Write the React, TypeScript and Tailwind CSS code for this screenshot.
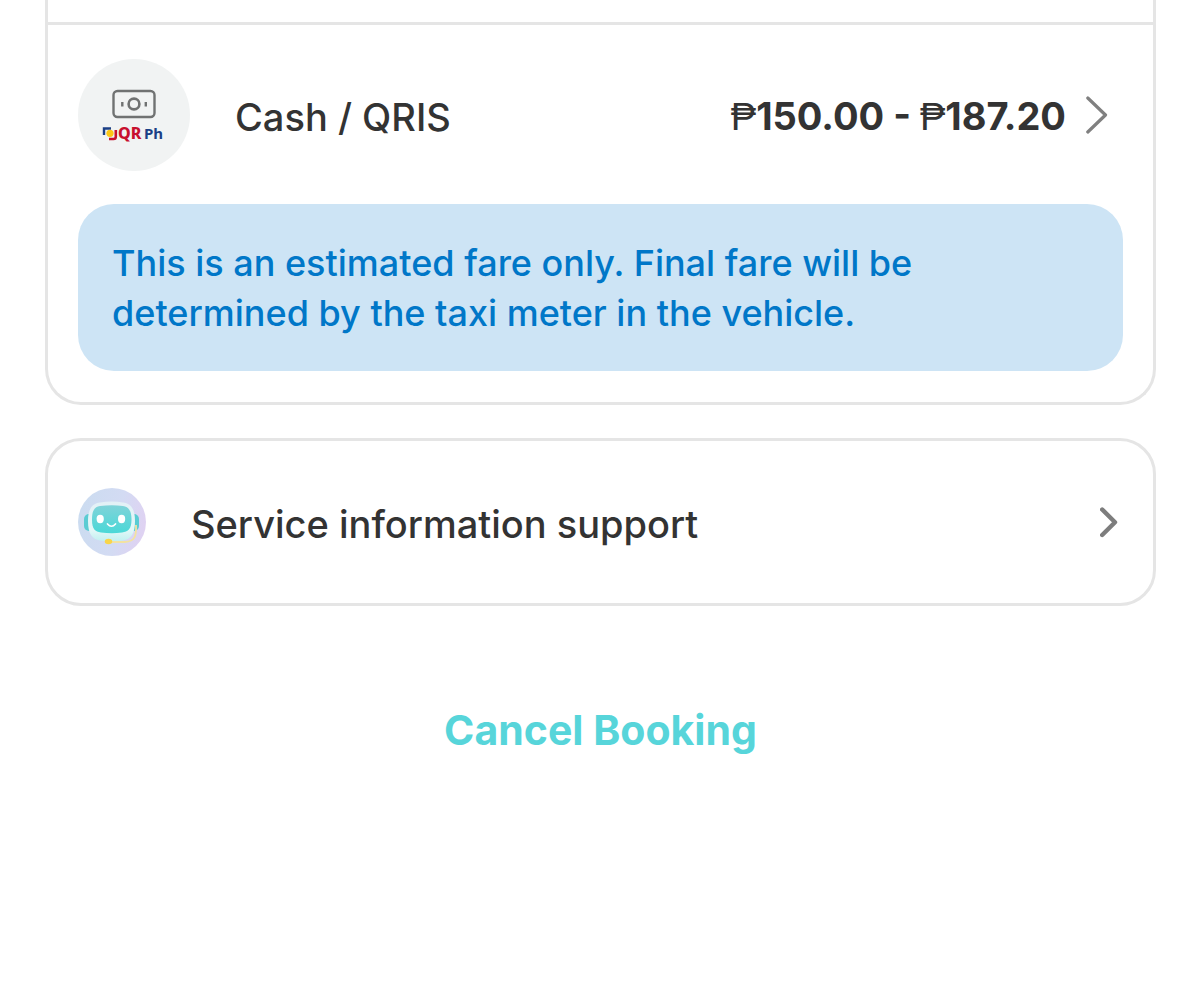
interface ChevronProps {
    large?: boolean;
}

function Chevron({ large = false }: ChevronProps) {
    if (large) {
        return (
            <svg className="shrink-0" width="22" height="38" viewBox="0 0 22 38" fill="none" aria-hidden="true">
                <path
                    d="M1.8 2L19.5 19L1.8 36"
                    stroke="#808080"
                    strokeWidth="3.2"
                    strokeLinecap="round"
                    strokeLinejoin="round"
                />
            </svg>
        );
    }

    return (
        <svg className="shrink-0" width="18" height="32" viewBox="0 0 18 32" fill="none" aria-hidden="true">
            <path
                d="M2.2 3.5L15 16.300L2.2 29"
                stroke="#7d7d7d"
                strokeWidth="4.4"
                strokeLinecap="round"
                strokeLinejoin="round"
            />
        </svg>
    );
}

function PaymentIcon() {
    return (
        <svg className="shrink-0" width="112" height="112" viewBox="0 0 112 112" fill="none" aria-hidden="true">
            <circle cx="56" cy="56" r="56" fill="#f1f3f3" />
            <g stroke="#707272">
                <rect x="35.5" y="32" width="41" height="26" rx="4" strokeWidth="2.4" />
                <circle cx="56" cy="45" r="5.4" strokeWidth="2.6" />
                <path d="M44.300 43v4.500M67.800 43v4.500" strokeWidth="2.4" />
            </g>
            <path d="M26 76V69.500h7" stroke="#1b3f86" strokeWidth="2.4" />
            <path d="M31 80h4.500q2.300 0 2.300-2.300V71" stroke="#c8102e" strokeWidth="2.600" />
            <circle cx="32" cy="74.300" r="3.600" fill="#fdc716" />
            <text x="40" y="80" fontFamily="'Noto Sans', sans-serif" fontSize="16" fontWeight="800" fill="#c8102e">
                QR
            </text>
            <text x="66" y="80" fontFamily="'Noto Sans', sans-serif" fontSize="15" fontWeight="700" fill="#1b3f86">
                Ph
            </text>
        </svg>
    );
}

function RobotIcon() {
    return (
        <svg className="shrink-0" width="68" height="68" viewBox="0 0 68 68" fill="none" aria-hidden="true">
            <defs>
                <linearGradient id="robot-bg" x1="0" y1="20" x2="68" y2="34" gradientUnits="userSpaceOnUse">
                    <stop stopColor="#cbdcf0" />
                    <stop offset="0.6" stopColor="#d3dbf3" />
                    <stop offset="1" stopColor="#dfd2f2" />
                </linearGradient>
                <linearGradient id="robot-head" x1="34" y1="13" x2="34" y2="54" gradientUnits="userSpaceOnUse">
                    <stop stopColor="#e3f0f6" />
                    <stop offset="0.7" stopColor="#e4f8f8" />
                    <stop offset="1" stopColor="#bff0f0" />
                </linearGradient>
                <linearGradient id="robot-face" x1="34" y1="17" x2="34" y2="45" gradientUnits="userSpaceOnUse">
                    <stop stopColor="#80d3d9" />
                    <stop offset="1" stopColor="#4bd8d7" />
                </linearGradient>
            </defs>
            <circle cx="34" cy="34" r="34" fill="url(#robot-bg)" />
            <rect x="6" y="26" width="10" height="17" rx="5" fill="#5accd3" />
            <rect x="51" y="26" width="10" height="17" rx="5" fill="#5accd3" />
            <path
                d="M22 14.500Q34 12.500 45 14.500C53 15.500 57 21 57 33C57 46 53 51 45 52.500Q34 54.500 22 52.500C14 51 10 46 10 33C10 21 14 15.500 22 14.500Z"
                fill="url(#robot-head)"
            />
            <path
                d="M22 18Q34 16.500 45 18C51 19 53.500 23 53.500 32C53.500 41 50 43.500 44 44.500Q34 46 23 44.500C17 43.500 14 41 14 32C14 23 16 19 22 18Z"
                fill="url(#robot-face)"
            />
            <ellipse cx="22.200" cy="31" rx="3.600" ry="4.200" fill="#fff" />
            <ellipse cx="43.600" cy="31" rx="3.600" ry="4.200" fill="#fff" />
            <path d="M29.500 36Q33.500 40.500 37.500 36" stroke="#fff" strokeWidth="1.700" strokeLinecap="round" />
            <path d="M58 37C58.500 48 57 53.500 47 54H31" stroke="#f3e2a0" strokeWidth="1.800" />
            <ellipse cx="30.500" cy="53.500" rx="3.700" ry="2.800" fill="#f8d54a" />
        </svg>
    );
}

function Peso() {
    return <span className="font-['Liberation_Sans',sans-serif] font-normal">₱</span>;
}

function FareCard() {
    return (
        <section className="rounded-b-[36px] border-3 border-t-0 border-[#e5e5e5] pt-[22px]">
            <div className="border-t-3 border-[#e5e5e5] px-[30px] pt-[34px] pb-[31px]">
                <button type="button" className="flex w-full items-center text-left">
                    <PaymentIcon />
                    <span className="ml-[45px] pt-[3px] text-[38px] leading-[50px] font-medium">Cash / QRIS</span>
                    <span className="mr-5 ml-auto pt-[3px] text-[38px] leading-[50px] font-bold">
                        <Peso />
                        150.00 - <Peso />
                        187.20
                    </span>
                    <span className="mr-[15px]">
                        <Chevron large />
                    </span>
                </button>

                <p className="mt-[33px] rounded-[36px] bg-[#cde4f5] px-[34px] pt-[34px] pb-[33px] text-[36px] leading-[50px] font-medium text-[#0077c8]">
                    This is an estimated fare only. Final fare will be
                    <br />
                    determined by the taxi meter in the vehicle.
                </p>
            </div>
        </section>
    );
}

function SupportCard() {
    return (
        <button
            type="button"
            className="mt-[33px] flex w-full items-center rounded-[36px] border-3 border-[#e5e5e5] px-[30px] py-[47px] text-left"
        >
            <RobotIcon />
            <span className="ml-[45px] pt-[3px] text-[38px] leading-[50px] font-medium">
                Service information support
            </span>
            <span className="mr-[5px] ml-auto">
                <Chevron />
            </span>
        </button>
    );
}

export default function App() {
    return (
        <main className="min-h-screen bg-white pr-11 pl-[45px] font-[Inter,sans-serif] text-[#333333]">
            <FareCard />
            <SupportCard />
            <div className="mt-24 flex justify-center">
                <button type="button" className="px-4 text-[41px] leading-[56px] font-bold text-[#57d5da]">
                    Cancel Booking
                </button>
            </div>
        </main>
    );
}
